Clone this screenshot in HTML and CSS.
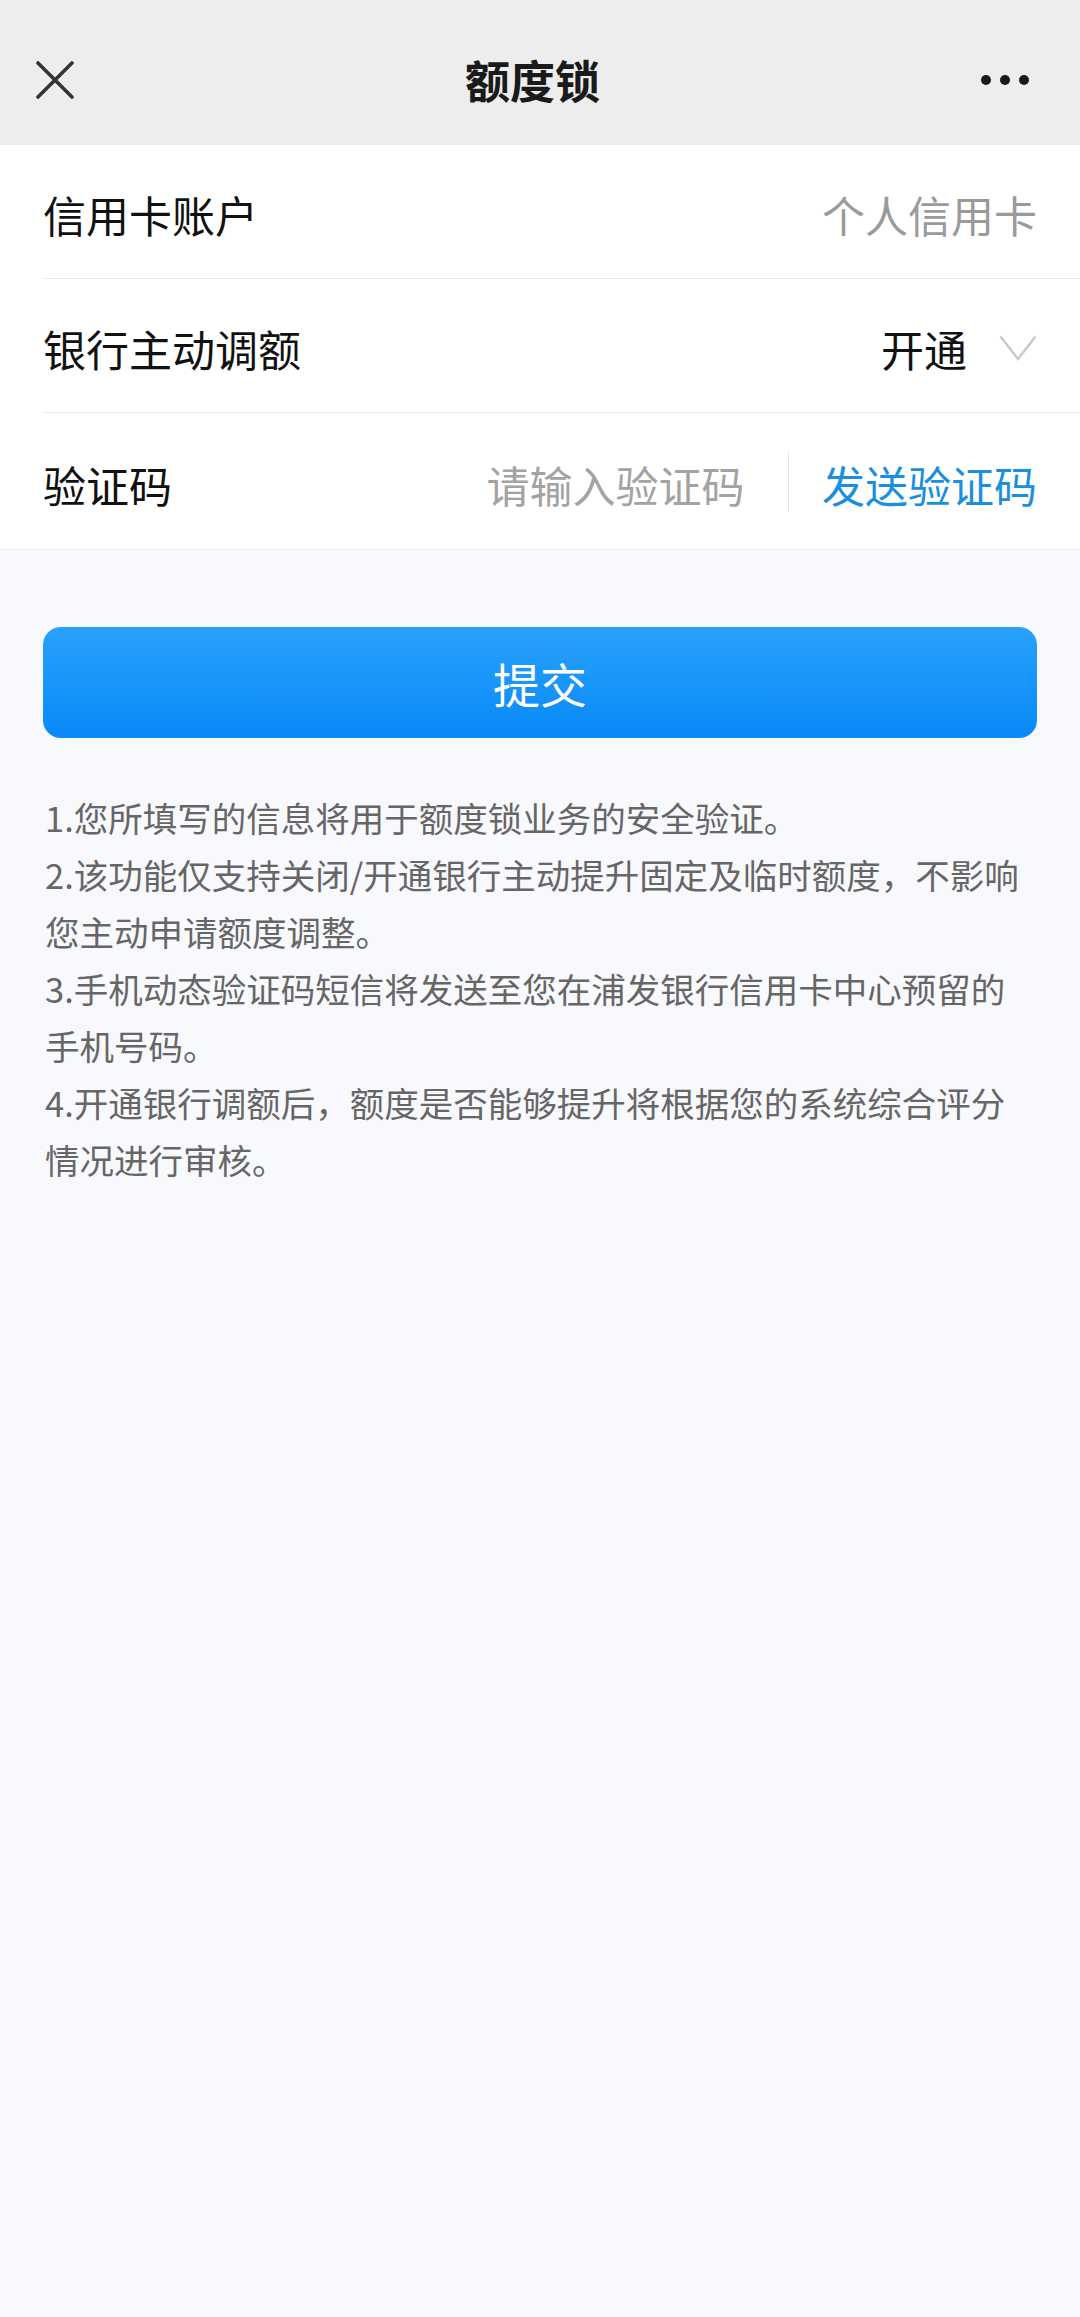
FILE: index.html
```html
<!DOCTYPE html>
<html lang="zh-CN">
<head>
    <meta charset="UTF-8">
    <meta name="viewport" content="width=device-width, initial-scale=1.0">
    <title>额度锁</title>
    <link rel="stylesheet" href="styles.css">
</head>
<body>

    <!-- Шапка -->
    <header class="top-bar">
        <button class="icon-btn close-btn" aria-label="关闭">
            <svg width="38" height="38" viewBox="0 0 38 38">
                <path d="M2 2 L36 36 M36 2 L2 36" stroke="#333" stroke-width="3.6" stroke-linecap="round" fill="none"/>
            </svg>
        </button>
        <h1 class="top-title">额度锁</h1>
        <button class="icon-btn more-btn" aria-label="更多">
            <span class="dot"></span><span class="dot"></span><span class="dot"></span>
        </button>
    </header>

    <!-- Форма -->
    <section class="form-list">
        <div class="form-row">
            <span class="row-label">信用卡账户</span>
            <span class="row-value muted">个人信用卡</span>
        </div>
        <div class="form-row">
            <span class="row-label">银行主动调额</span>
            <span class="row-value">
                开通
                <svg class="chevron" width="38" height="26" viewBox="0 0 38 26">
                    <polyline points="1.5,1.5 19,24 36.5,1.5" stroke="#c9c9c9" stroke-width="2.4" fill="none"/>
                </svg>
            </span>
        </div>
        <div class="form-row">
            <span class="row-label">验证码</span>
            <input class="code-input" type="text" placeholder="请输入验证码">
            <span class="row-sep"></span>
            <button class="send-btn">发送验证码</button>
        </div>
    </section>

    <button class="submit-btn">提交</button>

    <!-- Пояснения -->
    <div class="notes">
        <p>1.您所填写的信息将用于额度锁业务的安全验证。</p>
        <p>2.该功能仅支持关闭/开通银行主动提升固定及临时额度，不影响<br>您主动申请额度调整。</p>
        <p>3.手机动态验证码短信将发送至您在浦发银行信用卡中心预留的<br>手机号码。</p>
        <p>4.开通银行调额后，额度是否能够提升将根据您的系统综合评分<br>情况进行审核。</p>
    </div>

</body>
</html>
```

FILE: styles.css
```css
body {
    font-family: "Noto Sans CJK SC", "Noto Sans", sans-serif;
    background-color: #f8f9fd;
    margin: 0;
    min-height: 100vh;
    color: #1a1a1a;
}

button {
    font-family: inherit;
    border: none;
    background: none;
    padding: 0;
    cursor: pointer;
}

/* шапка */
.top-bar {
    height: 145px;
    box-sizing: border-box;
    padding: 14px 51px 0 36px;
    background-color: #ededed;
    display: flex;
    align-items: center;
    justify-content: space-between;
}

.icon-btn {
    width: 48px;
    height: 48px;
    display: flex;
    align-items: center;
}

.close-btn svg {
    display: block;
}

.more-btn {
    justify-content: flex-end;
    gap: 9px;
}

.more-btn .dot {
    width: 10px;
    height: 10px;
    border-radius: 50%;
    background-color: #1a1a1a;
}

.top-title {
    margin: 0;
    font-size: 45px;
    font-weight: 700;
    color: #1a1a1a;
    line-height: 1;
}

/* форма */
.form-list {
    background-color: #fff;
    border-bottom: 1px solid #ececec;
}

.form-row {
    height: 134px;
    margin-left: 43px;
    padding: 5px 43px 0 0;
    box-sizing: border-box;
    display: flex;
    align-items: center;
    justify-content: space-between;
    font-size: 43px;
    border-bottom: 1.5px solid #e8e8e8;
}

.form-row:last-child {
    border-bottom: none;
    height: 136px;
}

.row-label {
    color: #111;
    white-space: nowrap;
}

.row-value {
    display: flex;
    align-items: center;
    gap: 32px;
    color: #111;
}

.row-value.muted {
    color: #9a9a9a;
}

.chevron {
    display: block;
}

.code-input {
    flex: 1;
    min-width: 0;
    border: none;
    outline: none;
    background: none;
    font-family: inherit;
    font-size: 43px;
    text-align: right;
    color: #111;
    padding: 0;
}

.code-input::placeholder {
    color: #a3a3a3;
}

.row-sep {
    width: 1.5px;
    height: 61px;
    margin: -4px 33px 0 43px;
    background-color: #e6e6e6;
}

.send-btn {
    font-size: 43px;
    color: #1a8fde;
    white-space: nowrap;
}

/* кнопка */
.submit-btn {
    display: block;
    width: calc(100% - 86px);
    height: 111px;
    margin: 77px 43px 0;
    border-radius: 18px;
    background: linear-gradient(#29a2fc, #0889f7);
    color: #fff;
    font-size: 47px;
}

/* пояснения */
.notes {
    padding: 51px 43px 0 45px;
    font-size: 34.5px;
    line-height: 57px;
    color: #666;
}

.notes p {
    margin: 0;
}
```
